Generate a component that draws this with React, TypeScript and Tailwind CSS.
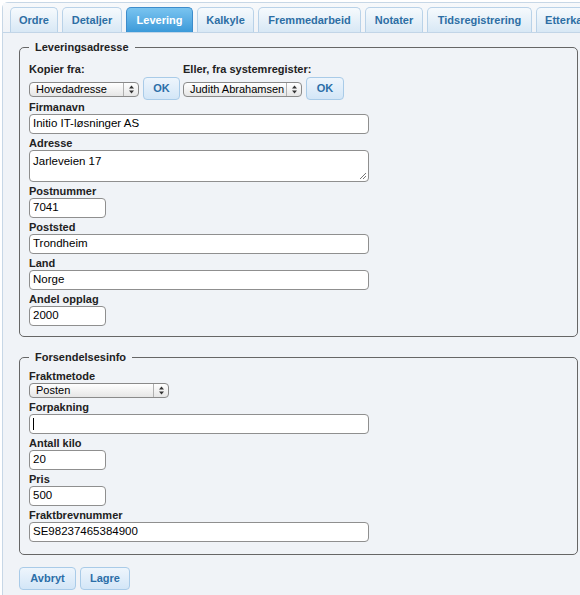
import React from 'react';

const font = { fontFamily: '"Liberation Sans", Arial, sans-serif' };

const tabs = [
  { label: 'Ordre', w: 'w-[48px]' },
  { label: 'Detaljer', w: 'w-[60px]' },
  { label: 'Levering', w: 'w-[67px]', active: true },
  { label: 'Kalkyle', w: 'w-[57px]' },
  { label: 'Fremmedarbeid', w: 'w-[103px]' },
  { label: 'Notater', w: 'w-[58px]' },
  { label: 'Tidsregistrering', w: 'w-[105px]' },
  { label: 'Etterkalkyle', w: 'w-[80px]' },
];

const Label: React.FC<{ children: React.ReactNode }> = ({ children }) => (
  <div className="h-[16px] pt-[3px] text-[11px] leading-[13px] font-bold text-[#222]">{children}</div>
);

const Input: React.FC<{ value: string; w: string; cursor?: boolean }> = ({ value, w, cursor }) => (
  <div
    className={`${w} h-[20px] bg-white border border-[#8f8f8f] rounded-[4px] pl-[3px] flex items-center text-[11.5px] text-black`}
  >
    {cursor && <span className="inline-block w-[1px] h-[12px] bg-black" />}
    {value}
  </div>
);

const Arrows = () => (
  <svg width="7" height="9" viewBox="0 0 7 9">
    <path d="M3.5 0.5 L6 3.5 L1 3.5 Z" fill="#333" />
    <path d="M3.5 8.5 L6 5.5 L1 5.5 Z" fill="#333" />
  </svg>
);

const Select: React.FC<{ value: string; w: string; className?: string }> = ({ value, w, className }) => (
  <div
    className={`${w} h-[15px] border border-[#8a8a8a] rounded-[4px] bg-gradient-to-b from-white to-[#e6e6e6] flex items-center text-[11px] text-black ${className ?? ''}`}
  >
    <span className="flex-1 pl-[6px] leading-[13px] whitespace-nowrap overflow-hidden">{value}</span>
    <span className="w-[15px] h-full border-l border-[#b0b0b0] flex items-center justify-center">
      <Arrows />
    </span>
  </div>
);

const BlueButton: React.FC<{ children: React.ReactNode; w: string; className?: string }> = ({
  children,
  w,
  className,
}) => (
  <button
    className={`${w} h-[23px] rounded-[4px] border border-[#a9cbe8] bg-gradient-to-b from-[#eef5fc] to-[#d3e6f7] text-[11px] font-bold text-[#2b6ea8] ${className ?? ''}`}
  >
    {children}
  </button>
);

const Fieldset: React.FC<{ legend: string; children: React.ReactNode; className?: string }> = ({
  legend,
  children,
  className,
}) => (
  <fieldset className={`w-[559px] border border-[#666] rounded-[5px] px-[9px] ${className ?? ''}`}>
    <legend className="px-[6px] text-[11px] leading-[14px] font-bold text-[#222]">{legend}</legend>
    {children}
  </fieldset>
);

export default function App() {
  return (
    <div className="w-[580px] h-[595px] overflow-hidden bg-white" style={font}>
      <div className="ml-[2px] mt-[2px] w-[620px] h-[640px] border border-[#c7d7e6] rounded-tl-[6px] bg-[#f0f3f7]">
        {/* tab bar */}
        <div className="h-[30px] pt-[4px] pl-[7px] flex gap-[4px] border-b border-[#c2d5e7] bg-gradient-to-b from-[#f7f9fb] to-[#f0f3f7]">
          {tabs.map((t) => (
            <div
              key={t.label}
              className={`${t.w} h-[25px] shrink-0 rounded-t-[5px] border border-b-0 flex items-center justify-center text-[11px] font-bold ${
                t.active
                  ? 'border-[#3d8ccb] bg-gradient-to-b from-[#79c4f0] to-[#3b9ad9] text-white'
                  : 'border-[#b9d2e8] bg-gradient-to-b from-[#f6fafd] to-[#d8e8f5] text-[#2d6ea4]'
              }`}
            >
              {t.label}
            </div>
          ))}
        </div>

        <div className="pl-[16px] pt-[7px]">
          <Fieldset legend="Leveringsadresse" className="pt-[6px] pb-[10px]">
            <div className="flex">
              <div className="w-[154px]">
                <Label>Kopier fra:</Label>
                <div className="flex items-start gap-[4px] h-[22px]">
                  <Select value="Hovedadresse" w="w-[110px]" className="mt-[6px]" />
                  <BlueButton w="w-[37px]" className="mt-[1px]">
                    OK
                  </BlueButton>
                </div>
              </div>
              <div>
                <Label>Eller, fra systemregister:</Label>
                <div className="flex items-start gap-[4px] h-[22px]">
                  <Select value="Judith Abrahamsen" w="w-[119px]" className="mt-[6px]" />
                  <BlueButton w="w-[38px]" className="mt-[1px]">
                    OK
                  </BlueButton>
                </div>
              </div>
            </div>
            <Label>Firmanavn</Label>
            <Input value="Initio IT-løsninger AS" w="w-[340px]" />
            <Label>Adresse</Label>
            <div className="relative w-[340px] h-[32px] bg-white border border-[#8f8f8f] rounded-[4px] pl-[3px] pt-[2px] text-[11.5px] text-black">
              Jarleveien 17
              <svg className="absolute right-[1px] bottom-[1px]" width="8" height="8" viewBox="0 0 8 8">
                <path d="M7 1 L1 7 M7 4 L4 7" stroke="#777" strokeWidth="1" />
              </svg>
            </div>
            <Label>Postnummer</Label>
            <Input value="7041" w="w-[77px]" />
            <Label>Poststed</Label>
            <Input value="Trondheim" w="w-[340px]" />
            <Label>Land</Label>
            <Input value="Norge" w="w-[340px]" />
            <Label>Andel opplag</Label>
            <Input value="2000" w="w-[77px]" />
          </Fieldset>

          <Fieldset legend="Forsendelsesinfo" className="mt-[13px] pt-[3px] pb-[12px]">
            <Label>Fraktmetode</Label>
            <Select value="Posten" w="w-[140px]" />
            <Label>Forpakning</Label>
            <Input value="" w="w-[340px]" cursor />
            <Label>Antall kilo</Label>
            <Input value="20" w="w-[77px]" />
            <Label>Pris</Label>
            <Input value="500" w="w-[77px]" />
            <Label>Fraktbrevnummer</Label>
            <Input value="SE98237465384900" w="w-[340px]" />
          </Fieldset>

          <div className="mt-[12px] flex gap-[4px]">
            <BlueButton w="w-[57px]">Avbryt</BlueButton>
            <BlueButton w="w-[50px]">Lagre</BlueButton>
          </div>
        </div>
      </div>
    </div>
  );
}
